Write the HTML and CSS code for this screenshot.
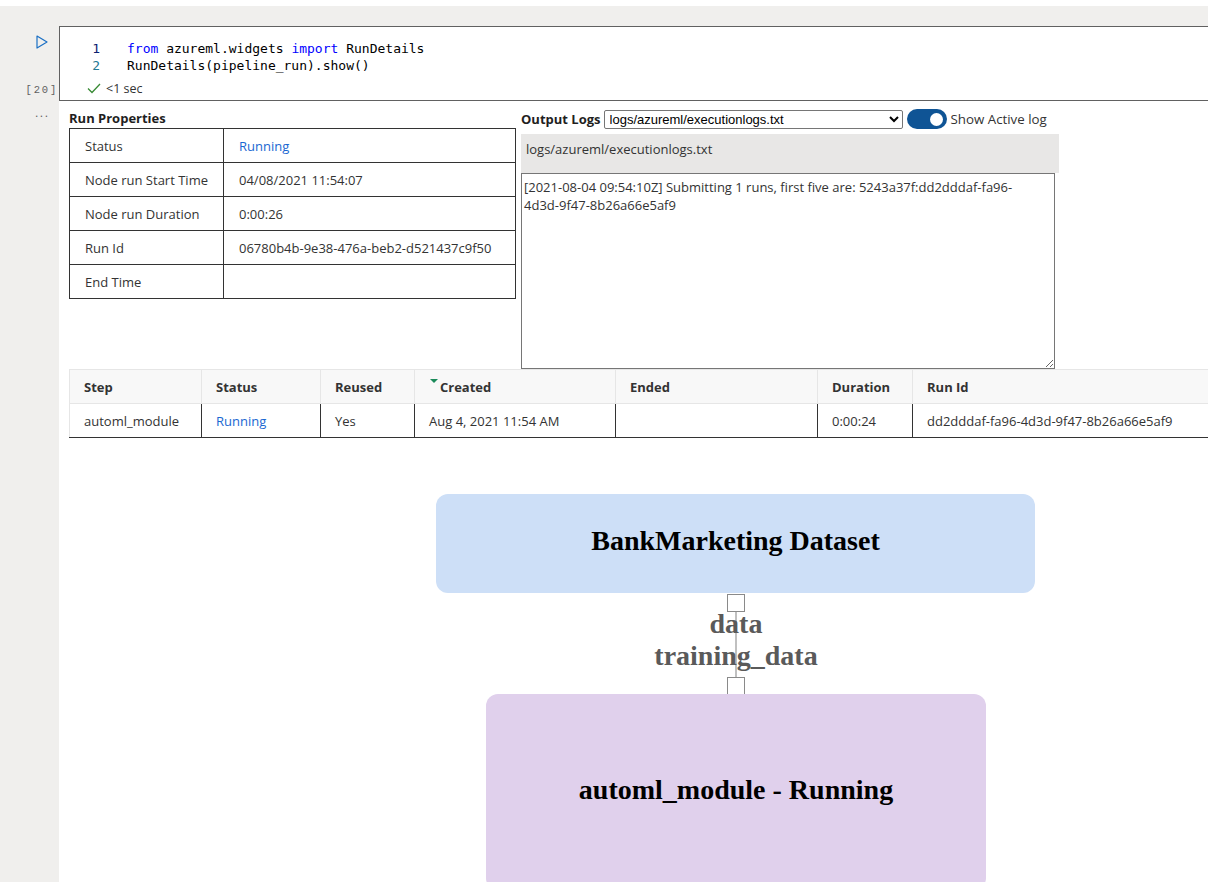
FILE: index.html
```html
<!DOCTYPE html>
<html lang="en">
<head>
<meta charset="utf-8">
<title>RunDetails</title>
<link rel="stylesheet" href="styles.css">
</head>
<body>
<div class="app">
  <aside class="gutter">
    <svg class="run-btn" width="12" height="14" viewBox="0 0 12 14"><polygon points="1,1 11,7 1,13" fill="none" stroke="#1a6fc4" stroke-width="1.2" stroke-linejoin="round"/></svg>
    <div class="exec-count">[20]</div>
    <div class="more">...</div>
  </aside>
  <main class="column">
    <section class="cell">
      <div class="code-line"><span class="ln active">1</span><code><span class="kw">from</span> azureml.widgets <span class="kw">import</span> RunDetails</code></div>
      <div class="code-line"><span class="ln">2</span><code>RunDetails(pipeline_run).show()</code></div>
      <div class="status">
        <svg width="14" height="11" viewBox="0 0 14 11"><polyline points="1,5.5 5,9.5 13,1" fill="none" stroke="#388a34" stroke-width="1.3"/></svg>
        <span>&lt;1 sec</span>
      </div>
    </section>
    <section class="output">
      <div class="top-row">
        <div class="props">
          <div class="title">Run Properties</div>
          <table class="props-table">
            <tr><td class="key">Status</td><td class="link">Running</td></tr>
            <tr><td class="key">Node run Start Time</td><td>04/08/2021 11:54:07</td></tr>
            <tr><td class="key">Node run Duration</td><td>0:00:26</td></tr>
            <tr><td class="key">Run Id</td><td>06780b4b-9e38-476a-beb2-d521437c9f50</td></tr>
            <tr><td class="key">End Time</td><td></td></tr>
          </table>
        </div>
        <div class="logs">
          <div class="logs-bar">
            <span class="title">Output Logs</span>
            <select class="log-select"><option>logs/azureml/executionlogs.txt</option></select>
            <span class="toggle"><span class="knob"></span></span>
            <span class="toggle-label">Show Active log</span>
          </div>
          <div class="log-path">logs/azureml/executionlogs.txt</div>
          <textarea class="log-text" readonly>[2021-08-04 09:54:10Z] Submitting 1 runs, first five are: 5243a37f:dd2dddaf-fa96-
4d3d-9f47-8b26a66e5af9</textarea>
        </div>
      </div>
      <table class="steps">
        <colgroup>
          <col style="width:132px"><col style="width:119px"><col style="width:94px"><col style="width:201px"><col style="width:202px"><col style="width:95px"><col style="width:300px">
        </colgroup>
        <thead>
          <tr><th>Step</th><th>Status</th><th>Reused</th><th><span class="sort"></span>Created</th><th>Ended</th><th>Duration</th><th>Run Id</th></tr>
        </thead>
        <tbody>
          <tr><td>automl_module</td><td class="link">Running</td><td>Yes</td><td>Aug 4, 2021 11:54 AM</td><td></td><td>0:00:24</td><td>dd2dddaf-fa96-4d3d-9f47-8b26a66e5af9</td></tr>
        </tbody>
      </table>
      <div class="graph">
        <div class="node dataset">BankMarketing Dataset</div>
        <div class="port port-out"></div>
        <div class="edge"></div>
        <div class="edge-label lbl-data">data</div>
        <div class="edge-label lbl-train">training_data</div>
        <div class="port port-in"></div>
        <div class="node module">automl_module - Running</div>
      </div>
    </section>
  </main>
</div>
</body>
</html>
```

FILE: styles.css
```css
html, body {
  margin: 0;
  padding: 0;
  background: #ffffff;
  overflow: hidden;
}
body {
  font-family: "Open Sans", "Noto Sans", sans-serif;
  font-size: 13px;
  color: #333333;
}
.app {
  margin-top: 6px;
  height: 876px;
  background: #f0efed;
  display: flex;
}
.gutter {
  width: 59px;
  flex: none;
  display: flex;
  flex-direction: column;
}
.run-btn {
  margin: 29px 0 0 36px;
  display: block;
}
.exec-count {
  margin-top: 34px;
  width: 58px;
  text-align: right;
  font-family: "Liberation Mono", monospace;
  font-size: 10.5px;
  letter-spacing: 1.8px;
  color: #616161;
  line-height: 14px;
}
.more {
  margin-top: 9px;
  margin-left: 35px;
  font-family: "Liberation Sans", sans-serif;
  font-size: 12px;
  letter-spacing: 1.5px;
  color: #616161;
  line-height: 14px;
}
.column {
  flex: 1;
  min-width: 0;
  padding-top: 20px;
  display: flex;
  flex-direction: column;
}
.cell {
  background: #fff;
  border-top: 1px solid #616161;
  border-bottom: 1px solid #616161;
  border-left: 1px solid #616161;
  height: 60px;
  padding-top: 13px;
  box-sizing: content-box;
}
.code-line {
  display: flex;
  height: 17px;
  line-height: 17px;
  font-family: "DejaVu Sans Mono", monospace;
  font-size: 13px;
  color: #000;
}
.code-line .ln {
  width: 40px;
  text-align: right;
  color: #237893;
}
.code-line .ln.active {
  color: #0b216f;
}
.code-line code {
  font-family: inherit;
  margin-left: 27px;
  white-space: pre;
}
.kw {
  color: #0000ff;
}
.status {
  margin-top: 7px;
  height: 14px;
  display: flex;
  align-items: center;
  gap: 5px;
  padding-left: 27px;
  font-size: 12.5px;
  color: #333;
}
.status svg {
  display: block;
}
.output {
  flex: 1;
  background: #fff;
  padding-left: 10px;
  overflow: hidden;
}
.top-row {
  display: flex;
  gap: 5px;
}
.props {
  width: 447px;
  flex: none;
}
.title {
  font-weight: 700;
  color: #1f1f1f;
  line-height: 19px;
}
.props .title {
  padding-top: 8px;
}
.props-table {
  width: 447px;
  border-collapse: collapse;
}
.props-table td {
  border: 1px solid #333;
  height: 33px;
  padding: 0 15px;
  color: #333;
}
.props-table td.key {
  width: 123px;
}
.link {
  color: #1a67d2 !important;
}
.logs {
  display: flex;
  flex-direction: column;
}
.logs-bar {
  margin-top: 8px;
  height: 20px;
  display: flex;
  align-items: center;
}
.log-select {
  margin-left: 3px;
  width: 299px;
  height: 19px;
  font-family: "Liberation Sans", Arial, sans-serif;
  font-size: 13px;
  color: #000;
  border: 1px solid #767676;
  border-radius: 2px;
  background: #fff;
  padding: 0 0 0 1px;
}
.toggle {
  margin-left: 4px;
  width: 40px;
  height: 20px;
  border-radius: 10px;
  background: #0f5495;
  display: flex;
  align-items: center;
  justify-content: flex-end;
  padding-right: 4px;
  box-sizing: border-box;
}
.knob {
  width: 13px;
  height: 13px;
  border-radius: 50%;
  background: #fff;
}
.toggle-label {
  margin-left: 4px;
  color: #333;
  font-size: 13.3px;
}
.log-path {
  margin-top: 5px;
  width: 538px;
  height: 39px;
  box-sizing: border-box;
  background: #e8e7e6;
  padding: 6px 0 0 5px;
  line-height: 18px;
  color: #333;
}
.log-text {
  display: block;
  width: 534px;
  height: 196px;
  box-sizing: border-box;
  border: 1px solid #767676;
  border-radius: 0;
  margin: 0;
  padding: 4px 2px;
  font-family: "Open Sans", "Noto Sans", sans-serif;
  font-size: 13px;
  line-height: 18px;
  color: #333;
  resize: both;
  white-space: pre-wrap;
  outline: none;
}
.steps {
  width: 1143px;
  border-collapse: collapse;
  table-layout: fixed;
}
.steps th {
  height: 33px;
  background: #f8f8f8;
  border: 1px solid #e6e6e6;
  text-align: left;
  font-weight: 700;
  padding: 0 14px;
  color: #333;
  white-space: nowrap;
}
.steps td {
  height: 33px;
  border-right: 1px solid #333;
  border-bottom: 1px solid #333;
  padding: 0 14px;
  color: #333;
  white-space: nowrap;
}
.steps td:first-child {
  border-left: 1px solid #e6e6e6;
}
.sort {
  display: inline-block;
  width: 0;
  height: 0;
  border-left: 4px solid transparent;
  border-right: 4px solid transparent;
  border-top: 4px solid #1b8a5a;
  vertical-align: 9px;
  margin: 0 2px 0 0;
}
.steps th:nth-child(4) {
  padding-left: 15px;
}
.graph {
  position: relative;
  height: 445px;
  font-family: "Liberation Serif", "Times New Roman", serif;
  font-weight: 700;
}
.node {
  position: absolute;
  border-radius: 12px;
  display: flex;
  align-items: center;
  justify-content: center;
  font-size: 28px;
  color: #000;
}
.dataset {
  left: 367px;
  top: 56px;
  width: 599px;
  height: 99px;
  background: #cddff7;
  padding-bottom: 5px;
  box-sizing: border-box;
}
.module {
  left: 417px;
  top: 256px;
  width: 500px;
  height: 196px;
  background: #e0d0ec;
  padding-bottom: 4px;
  box-sizing: border-box;
}
.port {
  position: absolute;
  left: 658px;
  width: 18px;
  height: 18px;
  box-sizing: border-box;
  border: 1.5px solid #8a8a8a;
  background: #fff;
}
.port-out {
  top: 156px;
}
.port-in {
  top: 239px;
}
.edge {
  position: absolute;
  left: 666px;
  top: 174px;
  width: 2px;
  height: 65px;
  background: #c0c0c0;
}
.edge-label {
  position: absolute;
  left: 467px;
  width: 400px;
  text-align: center;
  font-size: 28px;
  line-height: 32px;
  color: #5a5a5a;
}
.lbl-data {
  top: 170px;
}
.lbl-train {
  top: 202px;
}
```
